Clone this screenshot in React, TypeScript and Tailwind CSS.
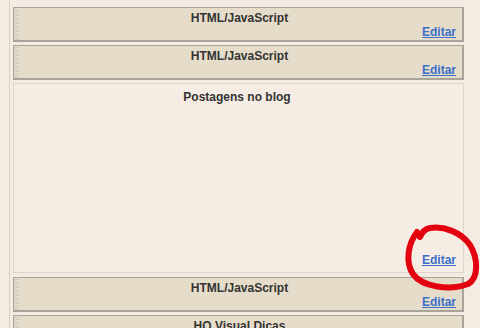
import React from 'react';

function Handle() {
  return (
    <div className="w-[5px] self-stretch bg-[repeating-linear-gradient(0deg,#cfc7b8_0px,#cfc7b8_1px,#ebe4d6_1px,#ebe4d6_2px)]" />
  );
}

function Widget({ title }: { title: string }) {
  return (
    <div className="flex shrink-0 h-[35px] border border-[#a9a49b] border-b-2 border-r-2 bg-[#e6dcca]">
      <Handle />
      <div className="flex-1 flex flex-col pl-1 pr-[6px] pt-[4px] pb-[4px]">
        <div className="text-center text-[12px] font-bold text-[#333] leading-[13px]">{title}</div>
        <div className="mt-auto text-right leading-[11px]">
          <a href="#" className="text-[12px] font-bold text-[#3b6fc8] underline">Editar</a>
        </div>
      </div>
    </div>
  );
}

export default function App() {
  return (
    <div className="w-[480px] h-[328px] overflow-hidden bg-[#f4ece2] relative font-['Liberation_Sans',Arial,sans-serif]">
      <div className="ml-[9px] w-[460px] h-full border-l border-[#d9d2c7] pl-[3px] pr-[5px] pt-[7px] flex flex-col gap-[3px]">
        <Widget title="HTML/JavaScript" />
        <Widget title="HTML/JavaScript" />
        <div className="shrink-0 h-[190px] mb-[1px] border border-[#dcd6cc] bg-[#f5ede3] flex flex-col pl-1 pr-[7px] pt-[6px] pb-[5px]">
          <div className="text-center text-[12px] font-bold text-[#333] leading-[15px]">Postagens no blog</div>
          <div className="mt-auto text-right leading-[14px]">
            <a href="#" className="text-[12px] font-bold text-[#3b6fc8] underline">Editar</a>
          </div>
        </div>
        <Widget title="HTML/JavaScript" />
        <Widget title="HQ Visual Dicas" />
      </div>
      <svg className="absolute left-0 top-0 pointer-events-none" width="480" height="328" viewBox="0 0 480 328">
        <path
          d="M417 232 C408 244 405 262 413 274 C422 287 450 291 468 284 C479 278 478 258 470 245 C461 232 444 226 430 228 C425 229 422 232 420 237"
          fill="none"
          stroke="#e3000f"
          strokeWidth="6"
          strokeLinecap="round"
        />
      </svg>
    </div>
  );
}
